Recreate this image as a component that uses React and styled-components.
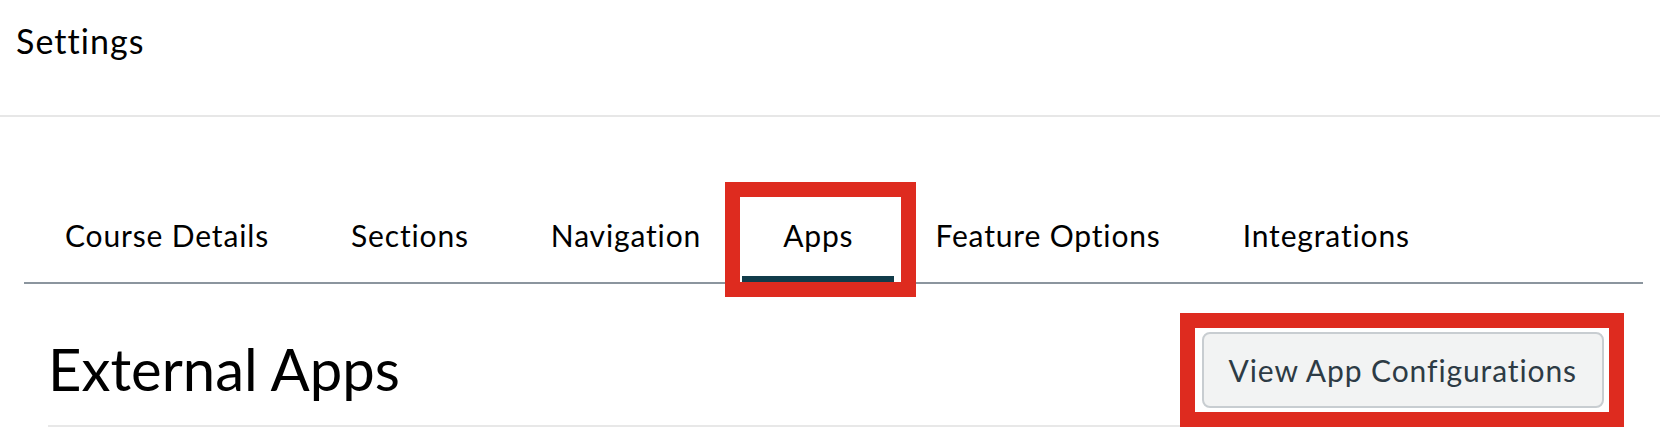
import React from "react";
import styled, { createGlobalStyle } from "styled-components";

const GlobalStyle = createGlobalStyle`
    body {
        margin: 0;
        background: #ffffff;
        font-family: Lato, "Noto Sans", sans-serif;
        color: #000000;
    }
`;

const Page = styled.div`
    width: 100%;
    min-height: 430px;
    overflow: hidden;
`;

const Header = styled.div`
    height: 117px;
    box-sizing: border-box;
    padding: 21px 0 0 16px;
    border-bottom: 2px solid #e7e7e7;
`;

const Crumb = styled.div`
    font-size: 34px;
    line-height: 1.2;
    letter-spacing: 1.05px;
`;

const Content = styled.div`
    padding: 80px 17px 0 24px;
`;

const TabList = styled.div`
    display: flex;
    border-bottom: 2px solid #8b959e;
`;

const Tab = styled.div`
    position: relative;
    padding: 20px 41px 23px;
    font-size: 30px;
    line-height: 1.2;
    letter-spacing: 0.85px;
    white-space: nowrap;
    border-bottom: 6px solid ${(props) => (props.$active ? "#113c4a" : "transparent")};
`;

// red annotation frame drawn over the screenshot
const Marker = styled.span`
    position: absolute;
    top: ${(props) => props.$top}px;
    right: ${(props) => props.$right}px;
    bottom: ${(props) => props.$bottom}px;
    left: ${(props) => props.$left}px;
    border: 15px solid #de2b1f;
    pointer-events: none;
`;

const TitleRow = styled.div`
    display: flex;
    justify-content: space-between;
    align-items: flex-start;
    margin: 48px 39px 0 24px;
    padding-bottom: 17px;
    border-bottom: 2px solid #e8e8e8;
`;

const Title = styled.h1`
    margin: 2px 0 0;
    font-size: 58px;
    font-weight: 400;
    line-height: 1.2;
`;

const ButtonWrap = styled.div`
    position: relative;
`;

const ConfigButton = styled.button`
    height: 76px;
    padding: 0 25px;
    border: 2px solid #c8cdd1;
    border-radius: 8px;
    background: #f2f3f3;
    color: #2d3b45;
    font-family: Lato, "Noto Sans", sans-serif;
    font-size: 30px;
    letter-spacing: 0.9px;
    white-space: nowrap;
    cursor: pointer;
`;

const tabs = [
    "Course Details",
    "Sections",
    "Navigation",
    "Apps",
    "Feature Options",
    "Integrations"
];

const App = () => {
    return (
        <Page>
            <GlobalStyle />
            <Header>
                <Crumb>Settings</Crumb>
            </Header>
            <Content>
                <TabList>
                    {tabs.map((t) => (
                        <Tab key={t} $active={t === "Apps"}>
                            {t}
                            {t === "Apps" && (
                                <Marker $top={-15} $right={-22} $bottom={-21} $left={-17} />
                            )}
                        </Tab>
                    ))}
                </TabList>
                <TitleRow>
                    <Title>External Apps</Title>
                    <ButtonWrap>
                        <ConfigButton>View App Configurations</ConfigButton>
                        <Marker $top={-19} $right={-20} $bottom={-19} $left={-22} />
                    </ButtonWrap>
                </TitleRow>
            </Content>
        </Page>
    );
};

export default App;
